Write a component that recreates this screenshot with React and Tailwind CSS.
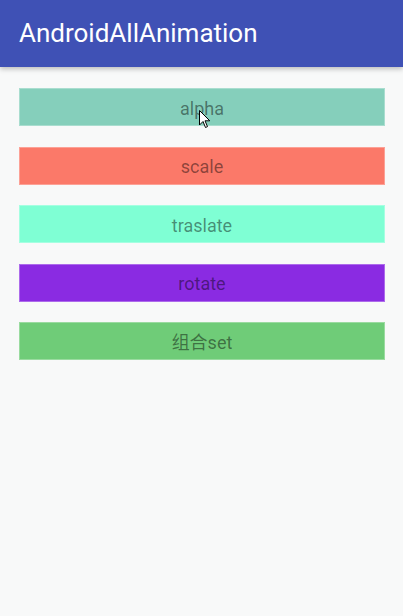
import React from "react";

const buttons = [
  { label: "alpha", cls: "bg-[#85cfbb]" },
  { label: "scale", cls: "bg-[#fb7969]" },
  { label: "traslate", cls: "bg-[#7fffd4]" },
  { label: "rotate", cls: "bg-[#8a2be2]" },
  { label: "组合set", cls: "bg-[#6fcc78]" },
];

export default function App() {
  return (
    <div
      className="relative w-[403px] h-[616px] bg-[#f8f9f9] overflow-hidden"
      style={{ fontFamily: 'Roboto, "Noto Sans CJK SC", sans-serif' }}
    >
      {/* toolbar */}
      <div className="relative z-10 h-[67px] bg-[#3f51b5] flex items-center px-[19px] shadow-[0_2px_5px_rgba(0,0,0,0.25)]">
        <span className="text-white text-[26px] leading-none -mt-[1px]">AndroidAllAnimation</span>
      </div>

      <div className="flex flex-col gap-[20.5px] pl-[19px] pt-[21px]">
        {buttons.map((b) => (
          <button
            key={b.label}
            className={`h-[38px] w-[366px] ${b.cls} border border-white/30 flex items-center justify-center pt-[3px] text-[18px] leading-none text-black/45`}
          >
            {b.label}
          </button>
        ))}
      </div>

      {/* mouse cursor */}
      <svg
        className="absolute left-[199px] top-[110px]"
        width="12"
        height="19"
        viewBox="0 0 12 19"
      >
        <path
          d="M0.5 0.5 L0.5 15 L4 11.5 L6.5 17.5 L8.5 16.6 L6 10.8 L10.8 10.8 Z"
          fill="white"
          stroke="black"
          strokeWidth="1"
          strokeLinejoin="round"
        />
      </svg>
    </div>
  );
}
